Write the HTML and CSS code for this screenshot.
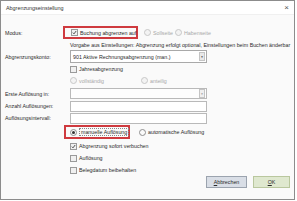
FILE: index.html
```html
<!DOCTYPE html>
<html>
<head>
<meta charset="utf-8">
<link rel="stylesheet" href="styles.css">
</head>
<body>
<div class="dialog">
  <div class="titlebar">
    <span class="title">Abgrenzungseinstellung</span>
    <span class="close">×</span>
  </div>
  <div class="content">
    <div class="row h13 mt11">
      <div class="label">Modus:</div>
      <div class="ctrl">
        <span class="hl hl-modus"><span class="cb"><svg viewBox="0 0 6 6" width="5" height="5"><path d="M1 3.2 L2.4 4.6 L5 1.2" fill="none" stroke="#333" stroke-width="1"/></svg></span>Buchung abgrenzen auf</span>
        <span class="opt dis soll"><span class="rb"></span>Sollseite</span>
        <span class="opt dis haben"><span class="rb"></span>Habenseite</span>
      </div>
    </div>
    <div class="row h11">
      <div class="label"></div>
      <div class="ctrl pad">Vorgabe aus Einstellungen: Abgrenzung erfolgt optional, Einstellungen beim Buchen änderbar</div>
    </div>
    <div class="row h13">
      <div class="label">Abgrenzungskonto:</div>
      <div class="ctrl pad">
        <div class="select"><span class="val">901 Aktive Rechnungsabgrenzung (man.)</span><span class="arrow">▼</span></div>
      </div>
    </div>
    <div class="row h12">
      <div class="label"></div>
      <div class="ctrl pad"><span class="opt"><span class="cb"></span>Jahresabgrenzung</span></div>
    </div>
    <div class="row h11">
      <div class="label"></div>
      <div class="ctrl pad">
        <span class="opt dis voll"><span class="rb"></span>vollständig</span>
        <span class="opt dis anteil"><span class="rb"></span>anteilig</span>
      </div>
    </div>
    <div class="row h11 mt2">
      <div class="label">Erste Auflösung in:</div>
      <div class="ctrl pad"><div class="box dd"><span class="arrow dim">▼</span></div></div>
    </div>
    <div class="row h12 mt1">
      <div class="label">Anzahl Auflösungen:</div>
      <div class="ctrl pad"><div class="box"></div></div>
    </div>
    <div class="row h12">
      <div class="label">Auflösungsintervall:</div>
      <div class="ctrl pad"><div class="box"></div></div>
    </div>
    <div class="row h14 mt1">
      <div class="label"></div>
      <div class="ctrl">
        <span class="hl hl-man"><span class="rb on"></span><span class="focus">manuelle Auflösung</span></span>
        <span class="opt auto"><span class="rb"></span>automatische Auflösung</span>
      </div>
    </div>
    <div class="row h12 mt1">
      <div class="label"></div>
      <div class="ctrl pad"><span class="opt"><span class="cb"><svg viewBox="0 0 6 6" width="5" height="5"><path d="M1 3.2 L2.4 4.6 L5 1.2" fill="none" stroke="#333" stroke-width="1"/></svg></span>Abgrenzung sofort verbuchen</span></div>
    </div>
    <div class="row h12">
      <div class="label"></div>
      <div class="ctrl pad"><span class="opt"><span class="cb"></span>Auflösung</span></div>
    </div>
    <div class="row h12">
      <div class="label"></div>
      <div class="ctrl pad"><span class="opt"><span class="cb"></span>Belegdatum beibehalten</span></div>
    </div>
  </div>
  <div class="footer">
    <button class="btn cancel"><u>A</u>bbrechen</button>
    <button class="btn ok"><u>O</u>K</button>
  </div>
</div>
</body>
</html>
```

FILE: styles.css
```css
html, body {
  margin: 0;
  padding: 0;
  background: #ffffff;
}
body {
  font-family: "Liberation Sans", Arial, sans-serif;
  font-size: 5.3px;
  color: #2a2a2a;
}
.dialog {
  width: 293px;
  height: 198px;
  border: 1px solid #8c8c8c;
  background: #fafafa;
  display: flex;
  flex-direction: column;
  box-sizing: content-box;
}
.titlebar {
  height: 14px;
  display: flex;
  align-items: center;
  justify-content: space-between;
  padding: 0 5px 0 5px;
  background: #ffffff;
  border-bottom: 1px solid #f0f0f0;
}
.title {
  font-size: 5.4px;
  color: #333;
}
.close {
  font-size: 8px;
  color: #555;
  line-height: 1;
}
.content {
  display: flex;
  flex-direction: column;
  padding-left: 4px;
}
.row {
  display: flex;
  align-items: center;
}
.h11 { height: 11px; }
.h12 { height: 12px; }
.h13 { height: 13px; }
.h14 { height: 14px; }
.mt1 { margin-top: 1px; }
.mt2 { margin-top: 2px; }
.mt11 { margin-top: 11px; }
.label {
  width: 58px;
  flex: none;
  white-space: nowrap;
}
.ctrl {
  display: flex;
  align-items: center;
  white-space: nowrap;
}
.pad {
  padding-left: 7px;
}
.hl {
  display: inline-flex;
  align-items: center;
  border: 2px solid #cf3a3f;
  box-sizing: border-box;
}
.hl-modus {
  width: 75px;
  height: 13px;
  padding-left: 6px;
}
.hl-man {
  width: 66px;
  height: 14px;
  padding-left: 4px;
  margin-left: 1px;
}
.cb {
  width: 5px;
  height: 5px;
  border: 1px solid #9a9a9a;
  background: #f0f0f0;
  display: inline-flex;
  align-items: center;
  justify-content: center;
  margin-right: 2px;
  flex: none;
}
.cb svg { display: block; }
.rb {
  width: 5px;
  height: 5px;
  border: 1px solid #8f8f8f;
  border-radius: 50%;
  background: #fbfbfb;
  display: inline-flex;
  align-items: center;
  justify-content: center;
  margin-right: 2px;
  flex: none;
  box-sizing: content-box;
}
.rb.on::after {
  content: "";
  width: 3px;
  height: 3px;
  border-radius: 50%;
  background: #333;
}
.opt {
  display: inline-flex;
  align-items: center;
}
.dis {
  color: #a8a8a8;
}
.dis .rb {
  border-color: #c8c8c8;
  background: #f3f3f3;
}
.soll { margin-left: 6px; }
.haben { margin-left: 2px; }
.anteil { margin-left: 37px; }
.auto { margin-left: 9px; }
.focus {
  display: inline-block;
  line-height: 6px;
  padding: 0 1px;
  border: 1px dotted #8a8a8a;
  background: transparent;
  color: #2a2a2a;
}
.select {
  width: 135px;
  height: 11px;
  border: 1px solid #a9a9a9;
  background: #ffffff;
  display: flex;
  align-items: center;
  justify-content: space-between;
}
.val { padding-left: 2px; }
.arrow {
  width: 6px;
  height: 9px;
  margin-right: 1px;
  background: #e8e8e8;
  border: 1px solid #c4c4c4;
  box-sizing: border-box;
  font-size: 3px;
  color: #444;
  display: flex;
  align-items: center;
  justify-content: center;
}
.arrow.dim { color: #999; background: #efefef; }
.box {
  width: 135px;
  height: 9px;
  border: 1px solid #b9b9b9;
  background: #ffffff;
}
.box.dd {
  display: flex;
  align-items: center;
  justify-content: flex-end;
  background: #fdfdfd;
}
.footer {
  margin-top: auto;
  display: flex;
  justify-content: flex-end;
  gap: 6px;
  padding: 0 4px 11px 0;
}
.btn {
  font-family: "Liberation Sans", Arial, sans-serif;
  font-size: 5.3px;
  color: #2a2a2a;
  height: 12px;
  padding: 0;
  margin: 0;
  display: flex;
  align-items: center;
  justify-content: center;
}
.cancel {
  width: 41px;
  background: #d9dee6;
  border: 1px solid #9ba3ae;
}
.ok {
  width: 37px;
  background: #dfe8cf;
  border: 1px solid #b9c79e;
}
```
